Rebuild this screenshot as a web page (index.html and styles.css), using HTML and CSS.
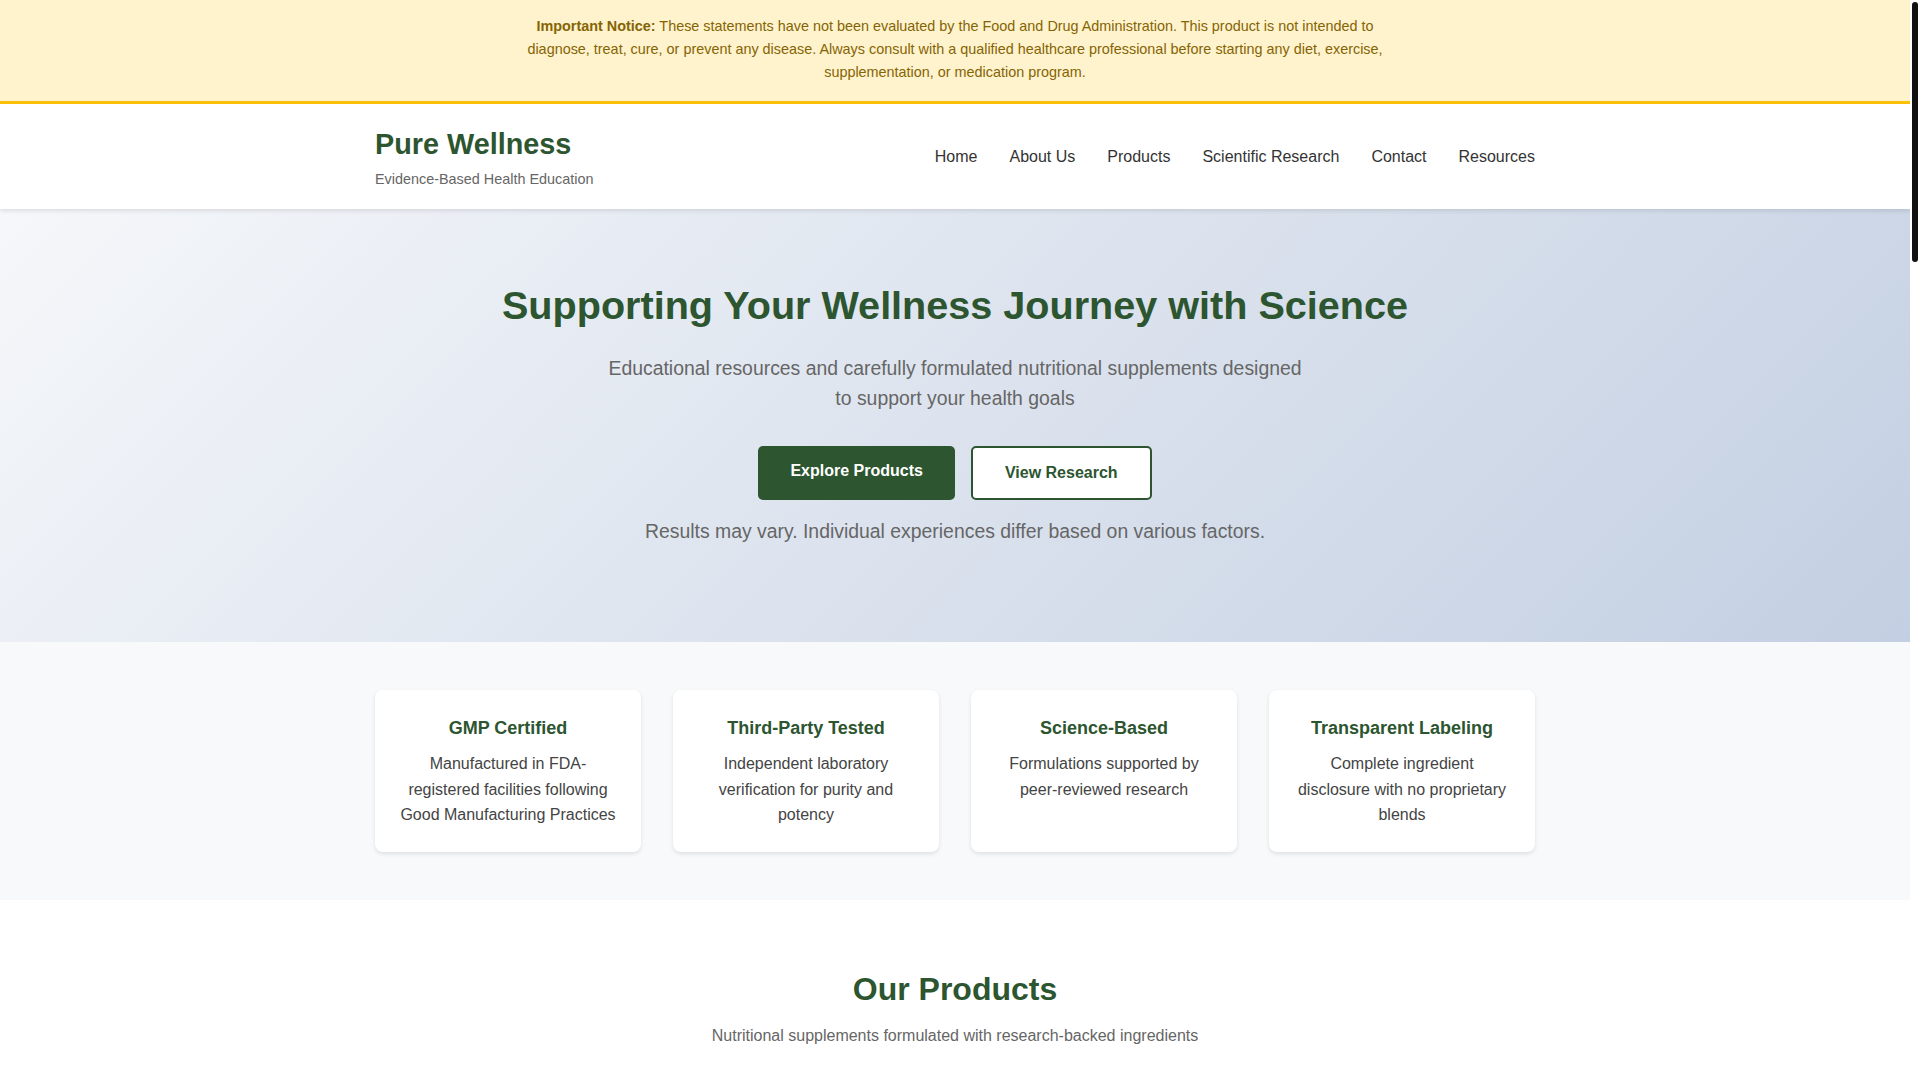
FILE: index.html
```html
<!DOCTYPE html>
<html lang="en">
<head>
<meta charset="utf-8">
<title>Pure Wellness - Evidence-Based Health Education</title>
<link rel="stylesheet" href="styles.css">
</head>
<body>
<div class="page">
<div class="notice">
  <p><strong>Important Notice:</strong> These statements have not been evaluated by the Food and Drug Administration. This product is not intended to diagnose, treat, cure, or prevent any disease. Always consult with a qualified healthcare professional before starting any diet, exercise, supplementation, or medication program.</p>
</div>

<header class="site-header">
  <div class="container header-inner">
    <div class="logo">
      <h1 class="logo-title">Pure Wellness</h1>
      <p class="logo-tagline">Evidence-Based Health Education</p>
    </div>
    <nav class="main-nav">
      <a href="#">Home</a>
      <a href="#">About Us</a>
      <a href="#">Products</a>
      <a href="#">Scientific Research</a>
      <a href="#">Contact</a>
      <a href="#">Resources</a>
    </nav>
  </div>
</header>

<section class="hero">
  <div class="container">
    <h2 class="hero-title">Supporting Your Wellness Journey with Science</h2>
    <p class="hero-lead">Educational resources and carefully formulated nutritional supplements designed to support your health goals</p>
    <div class="hero-actions">
      <a href="#" class="btn btn-primary">Explore Products</a>
      <button class="btn btn-outline">View Research</button>
    </div>
    <p class="hero-note">Results may vary. Individual experiences differ based on various factors.</p>
  </div>
</section>

<section class="features">
  <div class="container feature-grid">
    <div class="feature-card">
      <h3>GMP Certified</h3>
      <p>Manufactured in FDA-registered facilities following Good Manufacturing Practices</p>
    </div>
    <div class="feature-card">
      <h3>Third-Party Tested</h3>
      <p>Independent laboratory verification for purity and potency</p>
    </div>
    <div class="feature-card">
      <h3>Science-Based</h3>
      <p>Formulations supported by peer-reviewed research</p>
    </div>
    <div class="feature-card">
      <h3>Transparent Labeling</h3>
      <p>Complete ingredient disclosure with no proprietary blends</p>
    </div>
  </div>
</section>

<section class="products">
  <div class="container">
    <h2 class="section-title">Our Products</h2>
    <p class="section-sub">Nutritional supplements formulated with research-backed ingredients</p>
    <div class="product-grid">
      <div class="product-card"><div class="product-img"></div><h3>Daily Multivitamin</h3><p>A balanced blend of essential vitamins and minerals to support overall nutritional needs.</p><a href="#" class="btn btn-small">Learn More</a></div>
      <div class="product-card"><div class="product-img"></div><h3>Omega-3 Fish Oil</h3><p>Molecularly distilled EPA and DHA to support heart and brain health.</p><a href="#" class="btn btn-small">Learn More</a></div>
      <div class="product-card"><div class="product-img"></div><h3>Vitamin D3 + K2</h3><p>Supports bone health and normal immune function.</p><a href="#" class="btn btn-small">Learn More</a></div>
    </div>
  </div>
</section>

<footer class="site-footer">
  <div class="container">
    <p>&copy; 2024 Pure Wellness. All rights reserved.</p>
    <p>These statements have not been evaluated by the Food and Drug Administration.</p>
  </div>
</footer>
</div>

<div class="scrollbar" aria-hidden="true"><div class="scrollbar-thumb"></div></div>
</body>
</html>
```

FILE: styles.css
```css
* { box-sizing: border-box; }

html, body {
  margin: 0;
  padding: 0;
}

body {
  font-family: "Liberation Sans", Arial, sans-serif;
  line-height: 1.6;
  color: #333;
  background: #fff;
}

.page {
  margin-right: 10px;
}

/* Scrollbar drawn as page chrome */
.scrollbar {
  position: fixed;
  top: 0;
  right: 0;
  width: 10px;
  height: 100vh;
  background: #fff;
  z-index: 10;
}
.scrollbar-thumb {
  margin: 2px 2px 0;
  height: 260px;
  background: #111;
  border-radius: 3px;
}

.container {
  max-width: 1200px;
  margin: 0 auto;
  padding: 0 20px;
}

/* Notice */
.notice {
  background: #fff3cd;
  border-bottom: 3px solid #ffc107;
  padding: 15px 20px 17px;
  color: #856404;
  text-align: center;
  font-size: 14.4px;
}
.notice p {
  margin: 0 auto;
  max-width: 900px;
}

/* Header */
.site-header {
  background: #fff;
  padding: 20px 0 17.5px;
  box-shadow: 0 2px 4px rgba(0, 0, 0, 0.1);
  position: relative;
  z-index: 1;
}
.header-inner {
  display: flex;
  align-items: center;
  justify-content: space-between;
}
.logo {
  padding-top: 2.5px;
}
.logo-title {
  margin: 0 0 7px;
  font-size: 28.8px;
  line-height: 1.2;
  color: #2c5530;
  font-weight: bold;
}
.logo-tagline {
  margin: 0;
  font-size: 14.4px;
  color: #666;
}
.main-nav {
  display: flex;
  gap: 32px;
  margin-bottom: 2.5px;
}
.main-nav a {
  color: #333;
  text-decoration: none;
  font-size: 16px;
}

/* Hero */
.hero {
  background: linear-gradient(135deg, #f5f7fa 0%, #c3cfe2 100%);
  padding: 64px 0;
  text-align: center;
}
.hero-title {
  margin: 0 0 16px;
  font-size: 39.6px;
  line-height: 64px;
  color: #2c5530;
  font-weight: bold;
}
.hero-lead {
  margin: 0 auto 32px;
  max-width: 700px;
  font-size: 19.4px;
  line-height: 30.72px;
  color: #666;
}
.hero-actions {
  display: flex;
  justify-content: center;
  gap: 16px;
  margin-bottom: 16px;
}
.btn {
  display: inline-block;
  font-family: "Liberation Sans", Arial, sans-serif;
  font-size: 16px;
  font-weight: bold;
  line-height: 1.6;
  border-radius: 5px;
  text-decoration: none;
  cursor: pointer;
}
.btn-primary {
  background: #2c5530;
  color: #fff;
  border: none;
  padding: 12px 32px 16px;
}
.btn-outline {
  background: #fff;
  color: #2c5530;
  border: 2px solid #2c5530;
  padding: 12px 32px;
}
.btn-small {
  background: #2c5530;
  color: #fff;
  padding: 10px 24px;
}
.hero-note {
  margin: 0 0 32px;
  font-size: 19.4px;
  line-height: 30.72px;
  color: #666;
}

/* Features */
.features {
  background: #f8f9fa;
  padding: 48px 0;
}
.feature-grid {
  display: grid;
  grid-template-columns: repeat(4, 1fr);
  gap: 32px;
}
.feature-card {
  background: #fff;
  border-radius: 8px;
  padding: 24px;
  text-align: center;
  box-shadow: 0 2px 4px rgba(0, 0, 0, 0.1);
}
.feature-card h3 {
  margin: 0 0 8px;
  font-size: 18px;
  color: #2c5530;
}
.feature-card p {
  margin: 0;
  font-size: 16px;
  color: #444;
}

/* Products */
.products {
  padding: 64px 0;
  text-align: center;
}
.section-title {
  margin: 0 0 8px;
  font-size: 32px;
  color: #2c5530;
}
.section-sub {
  margin: 0 0 48px;
  font-size: 16px;
  color: #666;
}
.product-grid {
  display: grid;
  grid-template-columns: repeat(3, 1fr);
  gap: 32px;
}
.product-card {
  background: #fff;
  border-radius: 8px;
  padding: 24px;
  box-shadow: 0 2px 8px rgba(0, 0, 0, 0.1);
  text-align: center;
}
.product-img {
  height: 240px;
  background: #eef1f5;
  border-radius: 6px;
  margin-bottom: 16px;
}
.product-card h3 {
  margin: 0 0 8px;
  color: #2c5530;
  font-size: 20px;
}
.product-card p {
  margin: 0 0 16px;
  color: #555;
}

.site-footer {
  background: #2c5530;
  color: #e8efe8;
  padding: 48px 0;
  text-align: center;
  font-size: 14px;
}
.site-footer p { margin: 0 0 8px; }
```
